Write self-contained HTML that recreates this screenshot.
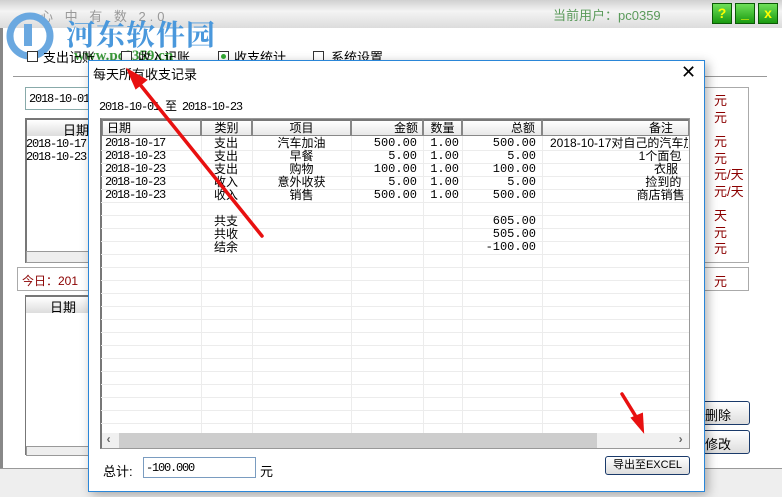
<!DOCTYPE html>
<html><head><meta charset="utf-8"><style>
*{margin:0;padding:0;box-sizing:border-box}
body{width:782px;height:497px;overflow:hidden;position:relative;background:#fff;font-family:"Liberation Mono","Noto Sans CJK SC",monospace;font-size:12px;color:#000}
.a{position:absolute;white-space:nowrap}
.m{letter-spacing:-1.2px}
.cj{font-family:"Liberation Sans","Noto Sans CJK SC",sans-serif}
.red{color:#8b0000}
.gb{position:absolute;top:3px;width:20px;height:21px;background:linear-gradient(#6fe05a,#1a9a10);border:1px solid #0b5a05;color:#ff0;font-weight:bold;text-align:center;font-size:14px;line-height:19px;font-family:"Liberation Sans",sans-serif}
.cb{position:absolute;top:51px;width:11px;height:11px;border:1px solid #333;background:#fff}
.hd{position:absolute;top:119px;height:17px;background:linear-gradient(#fff,#e8e8e8);border:1px solid #888;border-top:2px solid #777;text-align:center;line-height:14px}
.row{position:absolute;left:101px;width:588px;height:1px;background:#ececec}
.col{position:absolute;top:136px;width:1px;height:297px;background:#ececec}
.t{position:absolute;line-height:13px;white-space:pre}
</style></head><body>
<div class="a" style="left:0;top:0;width:782px;height:28px;background:linear-gradient(#d0d0d0,#f4f4f4 40%,#dcdcdc)"></div>
<div class="a cj" style="left:40px;top:6px;color:#999;letter-spacing:4px;font-size:13px">心 中 有 数 2.0</div>
<div class="a cj" style="left:553px;top:5px;color:#5a9a5a;font-size:13px">当前用户：pc0359</div>
<div class="gb" style="left:712px">?</div>
<div class="gb" style="left:735px">_</div>
<div class="gb" style="left:758px">x</div>
<div class="a" style="left:0;top:28px;width:3px;height:469px;background:#888"></div>
<svg class="a" style="left:6px;top:12px" width="52" height="48"><circle cx="24" cy="24" r="20" fill="none" stroke="#6aa8e0" stroke-width="7"/><rect x="18" y="12" width="8" height="22" fill="#6aa8e0"/></svg>
<div class="a" style="left:66px;top:13px;color:#4a98dc;font-size:29px;font-weight:bold;font-family:'Noto Serif CJK SC',serif;letter-spacing:1px">河东软件园</div>
<div class="a" style="left:74px;top:48px;color:#3a9a3a;font-size:15px;font-weight:bold;font-family:'Liberation Serif',serif">www.pc0359.cn</div>
<div class="cb" style="left:27px"></div><div class="a cj" style="left:43px;top:47px;font-size:13px">支出记账</div>
<div class="cb" style="left:121px"></div><div class="a cj" style="left:138px;top:47px;font-size:13px">收入记账</div>
<div class="cb" style="left:218px"><div style="margin:2px;width:5px;height:5px;background:#3a3;border-radius:50%"></div></div><div class="a cj" style="left:234px;top:47px;font-size:13px">收支统计</div>
<div class="cb" style="left:313px"></div><div class="a cj" style="left:331px;top:47px;font-size:13px">系统设置</div>
<div class="a" style="left:13px;top:76px;width:754px;height:1px;background:#999"></div>
<div class="a" style="left:25px;top:87px;width:70px;height:23px;border:1px solid #8aa;overflow:hidden"><span class="m" style="position:absolute;left:3px;top:4px">2018-10-01</span></div>
<div class="a" style="left:25px;top:118px;width:70px;height:145px;border:2px solid #777;border-right:none"></div>
<div class="a cj" style="left:27px;top:120px;width:68px;height:16px;background:linear-gradient(#fff,#ddd);padding-left:36px;font-size:13px">日期</div>
<div class="t m" style="left:26px;top:138px">2018-10-17</div><div class="t m" style="left:26px;top:151px">2018-10-23</div>
<div class="a" style="left:26px;top:251px;width:68px;height:12px;background:#eee;border:1px solid #999"></div>
<div class="a" style="left:17px;top:267px;width:80px;height:24px;border:1px solid #aaa"><span class="red cj" style="position:absolute;left:4px;top:4px">今日：201</span></div>
<div class="a" style="left:25px;top:295px;width:70px;height:160px;border:1px solid #777;border-top:2px solid #777"></div>
<div class="a cj" style="left:26px;top:297px;width:68px;height:16px;background:linear-gradient(#fff,#ddd);padding-left:24px;font-size:13px">日期</div>
<div class="a" style="left:26px;top:446px;width:68px;height:10px;background:#eee;border:1px solid #999"></div>
<div class="a" style="left:0;top:468px;width:782px;height:29px;background:#eee;border-top:1px solid #999"></div>
<div class="a" style="left:690px;top:87px;width:59px;height:176px;border:1px solid #aaa"></div>
<div class="a" style="left:690px;top:267px;width:59px;height:24px;border:1px solid #aaa"></div>
<div class="a cj red" style="left:714px;top:92px;font-size:13px;line-height:17px">元<br>元</div>
<div class="a cj red" style="left:714px;top:134px;font-size:13px;line-height:16.5px">元<br>元<br>元/天<br>元/天</div>
<div class="a cj red" style="left:714px;top:208px;font-size:13px;line-height:16.5px">天<br>元<br>元</div>
<div class="a cj red" style="left:714px;top:271px;font-size:13px">元</div>
<div class="a cj" style="left:690px;top:401px;width:60px;height:24px;border:1px solid #1a3a6a;border-radius:3px;background:linear-gradient(#fff,#ddd);padding:3px 0 0 14px;font-size:13px">删除</div>
<div class="a cj" style="left:690px;top:430px;width:60px;height:24px;border:1px solid #1a3a6a;border-radius:3px;background:linear-gradient(#fff,#ddd);padding:3px 0 0 14px;font-size:13px">修改</div>
<div class="a" style="left:88px;top:60px;width:617px;height:432px;background:#fff;border:1px solid #2a86d8;box-shadow:3px 3px 10px rgba(0,0,0,.3)"></div>
<div class="a cj" style="left:93px;top:64px;font-size:13px">每天所有收支记录</div>
<div class="a" style="left:681px;top:62px;font-size:18px;font-family:'Liberation Sans',sans-serif">✕</div>
<div class="a m" style="left:99px;top:97px"><span>2018-10-01 </span><span class="cj">至</span><span> 2018-10-23</span></div>
<div class="a" style="left:100px;top:118px;width:590px;height:331px;border:1px solid #999;border-left:2px solid #777"></div>
<div class="hd cj" style="left:102px;width:99px;text-align:left;padding-left:4px">日期</div>
<div class="hd cj" style="left:201px;width:51px">类别</div>
<div class="hd cj" style="left:252px;width:99px">项目</div>
<div class="hd cj" style="left:351px;width:72px;text-align:right;padding-right:4px">金额</div>
<div class="hd cj" style="left:423px;width:39px">数量</div>
<div class="hd cj" style="left:462px;width:80px;text-align:right;padding-right:6px">总额</div>
<div class="hd cj" style="left:542px;width:147px;text-align:right;padding-right:15px">备注</div>
<div class="col" style="left:201px"></div><div class="col" style="left:252px"></div><div class="col" style="left:351px"></div><div class="col" style="left:423px"></div><div class="col" style="left:462px"></div><div class="col" style="left:542px"></div>
<div class="row" style="top:150px"></div><div class="row" style="top:163px"></div><div class="row" style="top:176px"></div><div class="row" style="top:189px"></div><div class="row" style="top:202px"></div><div class="row" style="top:215px"></div><div class="row" style="top:228px"></div><div class="row" style="top:241px"></div><div class="row" style="top:254px"></div><div class="row" style="top:267px"></div><div class="row" style="top:280px"></div><div class="row" style="top:293px"></div><div class="row" style="top:306px"></div><div class="row" style="top:319px"></div><div class="row" style="top:332px"></div><div class="row" style="top:345px"></div><div class="row" style="top:358px"></div><div class="row" style="top:371px"></div><div class="row" style="top:384px"></div><div class="row" style="top:397px"></div><div class="row" style="top:410px"></div><div class="row" style="top:423px"></div>
<div class="t m" style="left:105px;top:137px">2018-10-17
2018-10-23
2018-10-23
2018-10-23
2018-10-23</div>
<div class="t cj" style="left:214px;top:137px">支出
支出
支出
收入
收入

共支
共收
结余</div>
<div class="t cj" style="left:252px;top:137px;width:99px;text-align:center">汽车加油
早餐
购物
意外收获
销售</div>
<div class="t" style="left:351px;top:137px;width:66px;text-align:right">500.00
5.00
100.00
5.00
500.00</div>
<div class="t" style="left:423px;top:137px;width:36px;text-align:right">1.00
1.00
1.00
1.00
1.00</div>
<div class="t" style="left:462px;top:137px;width:74px;text-align:right">500.00
5.00
100.00
5.00
500.00

605.00
505.00
-100.00</div>
<div class="t cj" style="left:550px;top:137px;width:138px;text-align:right;overflow:hidden">2018-10-17对自己的汽车加
1个面包  
衣服   
捡到的  
商店销售 </div>
<div class="a" style="left:102px;top:433px;width:587px;height:15px;background:#f0f0f0"></div>
<div class="a" style="left:119px;top:433px;width:478px;height:15px;background:#cdcdcd"></div>
<div class="a" style="left:105px;top:433px;color:#666;font-weight:bold">‹</div><div class="a" style="left:677px;top:433px;color:#666;font-weight:bold">›</div>
<div class="a cj" style="left:103px;top:461px;font-size:13px">总计:</div>
<div class="a m" style="left:143px;top:457px;width:113px;height:21px;border:1px solid #7a9cc0;padding:3px 0 0 2px">-100.000</div>
<div class="a cj" style="left:260px;top:461px;font-size:13px">元</div>
<div class="a cj" style="left:605px;top:456px;width:85px;height:19px;border:1px solid #1a3a6a;border-radius:3px;background:linear-gradient(#fff,#ddd);text-align:center;font-size:11px;line-height:17px">导出至EXCEL</div>
<svg class="a" style="left:0;top:0" width="782" height="497"><g stroke="#e81010" stroke-width="3.5" fill="#e81010" stroke-linecap="round"><line x1="262" y1="236" x2="138" y2="82"/><polygon points="128,70 146,80 136,88" stroke-width="2"/><line x1="622" y1="394" x2="638" y2="420"/><polygon points="643,431 632,418 642,414" stroke-width="2"/></g></svg>
</body></html>
